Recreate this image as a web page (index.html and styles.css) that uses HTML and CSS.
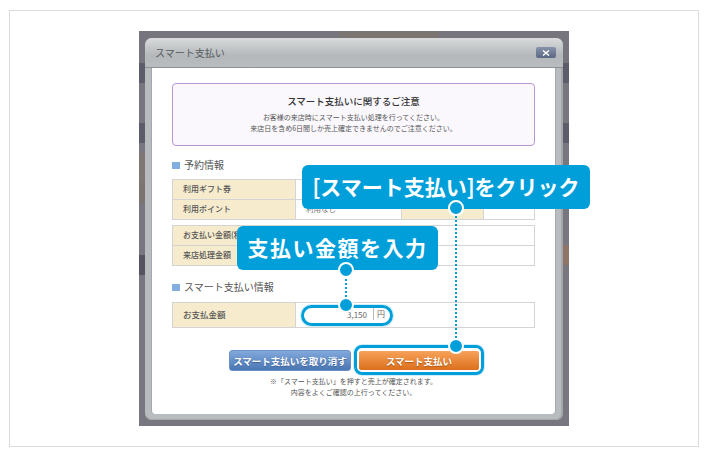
FILE: index.html
```html
<!DOCTYPE html>
<html lang="ja">
<head>
  <meta charset="UTF-8">
  <meta name="viewport" content="width=device-width, initial-scale=1.0" />
  <title>スマート支払い</title>
  <link rel="stylesheet" href="styles.css">
</head>
<body>
  <div class="quadro">
    <div class="tela">
      <div class="dialogo">
        <div class="dialogo-topo">
          <span class="dialogo-titulo">スマート支払い</span>
          <span class="fechar">
            <svg width="8" height="6" viewBox="0 0 8 6"><path d="M1 0.5L7 5.5M7 0.5L1 5.5" stroke="#fff" stroke-width="1.4" fill="none"/></svg>
          </span>
        </div>
        <div class="dialogo-corpo">
          <div class="aviso">
            <h2>スマート支払いに関するご注意</h2>
            <p>お客様の来店時にスマート支払い処理を行ってください。</p>
            <p>来店日を含め6日間しか売上確定できませんのでご注意ください。</p>
          </div>

          <h3 class="secao primeira">予約情報</h3>
          <table class="tabela">
            <tr>
              <th>利用ギフト券</th>
              <td class="valor"></td>
              <th class="meio"></th>
              <td></td>
            </tr>
            <tr>
              <th>利用ポイント</th>
              <td class="valor">利用なし</td>
              <th class="meio"></th>
              <td></td>
            </tr>
          </table>

          <table class="tabela segunda">
            <tr><th>お支払い金額(税込)</th><td></td></tr>
            <tr><th>来店処理金額</th><td></td></tr>
          </table>

          <h3 class="secao">スマート支払い情報</h3>
          <table class="tabela terceira">
            <tr>
              <th>お支払金額</th>
              <td>
                <div class="campo"><span class="campo-valor">3,150</span><span class="campo-un">円</span></div>
              </td>
            </tr>
          </table>

          <div class="botoes">
            <button class="btn btn-azul">スマート支払いを取り消す</button>
            <button class="btn btn-laranja">スマート支払い</button>
          </div>
          <p class="nota">※「スマート支払い」を押すと売上が確定されます。</p>
          <p class="nota">内容をよくご確認の上行ってください。</p>
        </div>
      </div>

      <!-- anotacoes por cima da tela -->
      <div class="realce realce-campo"></div>
      <div class="realce realce-botao"></div>
      <div class="linha linha-botao"></div>
      <div class="linha linha-campo"></div>
      <div class="balao balao-clique">[スマート支払い]をクリック</div>
      <div class="balao balao-valor">支払い金額を入力</div>
      <span class="ponto anel ponto-clique"></span>
      <span class="ponto anel ponto-valor"></span>
      <span class="ponto anel ponto-botao"></span>
      <span class="ponto anel ponto-campo"></span>
    </div>
  </div>
</body>
</html>
```

FILE: styles.css
```css
:root {
  --cor-balao: #009fd9;
  --cor-texto: #444444;
  --cor-bege: #f6ebcd;
  --cor-borda: #d4d4d4;
  --fonte: "Noto Sans CJK JP", "Noto Sans", sans-serif;
}

* {
  margin: 0;
  padding: 0;
  box-sizing: border-box;
}

body {
  font-family: var(--fonte);
  background-color: #ffffff;
  color: var(--cor-texto);
}

.quadro {
  width: 690px;
  height: 437px;
  margin: 10px 0 0 9px;
  border: 1px solid #dcdcdc;
  padding-top: 20px;
  display: flex;
  justify-content: center;
  align-items: flex-start;
}

.tela {
  position: relative;
  width: 430px;
  height: 395px;
  padding: 7px 6px 6px 6px;
  background:
    linear-gradient(#8f7468, #8f7468) right 0 top 214px / 6px 20px no-repeat,
    linear-gradient(#55535f, #55535f) left 0 top 224px / 6px 20px no-repeat,
    linear-gradient(#7e7874, #7e7874) left 0 top 122px / 6px 30px no-repeat,
    linear-gradient(#7a7470, #7a7470) left 0 top 152px / 6px 20px no-repeat,
    linear-gradient(#7b7572, #7b7572) 200px 0 / 100px 7px no-repeat,
    linear-gradient(to bottom,
      #76747c 0, #76747c 32px,
      #5d5c6b 32px, #5d5c6b 52px,
      #77757e 52px, #77757e 92px,
      #5d5c6b 92px, #5d5c6b 112px,
      #78767e 112px, #78767e 395px);
}

.dialogo {
  height: 382px;
  background-color: #b9bcbe;
  border-radius: 7px;
  box-shadow: inset -2px 0 0 #a5a7aa, inset 0 -1px 0 #a5a7aa;
  display: flex;
  flex-direction: column;
}

.dialogo-topo {
  height: 30px;
  flex-shrink: 0;
  padding: 0 7px 0 10px;
  border-radius: 7px 7px 0 0;
  border-bottom: 1px solid #8f9396;
  background: linear-gradient(to bottom, #d9dbdc, #b4b8ba 60%, #b9bcbe);
  display: flex;
  justify-content: space-between;
  align-items: center;
}

.dialogo-titulo {
  font-size: 10px;
  color: #555a5e;
}

.fechar {
  width: 20px;
  height: 11px;
  border-radius: 2px;
  background: linear-gradient(to bottom, #8893ab, #5b6785);
  display: flex;
  justify-content: center;
  align-items: center;
}

.dialogo-corpo {
  height: 346px;
  margin: 0 7px 0 6px;
  padding: 15px 20px 0 20px;
  background-color: #ffffff;
  border-left: 1px solid #a4a7ad;
  border-right: 1px solid #a4a7ad;
  border-radius: 0 0 4px 4px;
}

.aviso {
  height: 63px;
  border: 1px solid #b896d2;
  border-radius: 4px;
  background-color: #faf8fd;
  padding-top: 10px;
  text-align: center;
}

.aviso h2 {
  font-size: 9.5px;
  line-height: 14px;
  font-weight: 500;
  color: #333333;
  margin-bottom: 4px;
}

.aviso p {
  font-size: 7px;
  line-height: 11px;
  color: #555555;
}

.secao {
  font-size: 10px;
  line-height: 14px;
  font-weight: 400;
  color: #555555;
  display: flex;
  align-items: center;
  gap: 4px;
  margin-top: 15px;
  margin-bottom: 8px;
}

.secao::before {
  content: "";
  width: 8px;
  height: 7px;
  background-color: #82aee0;
}

.secao.primeira {
  margin-top: 12px;
  margin-bottom: 7px;
}

.tabela {
  width: 363px;
  border-collapse: collapse;
  table-layout: fixed;
}

.tabela th,
.tabela td {
  border: 1px solid var(--cor-borda);
  height: 20px;
  padding-bottom: 2px;
  font-size: 8px;
  text-align: left;
  vertical-align: middle;
}

.tabela th {
  width: 123px;
  padding-left: 10px;
  font-weight: 500;
  color: #555555;
  background-color: var(--cor-bege);
  white-space: nowrap;
  overflow: hidden;
}

.tabela .meio {
  width: 82px;
  padding: 0;
}

.tabela .valor {
  width: 106px;
  padding-left: 10px;
  color: #777777;
  font-size: 7.5px;
}

.tabela.segunda {
  margin-top: 5px;
}

.tabela.segunda + .secao {
  margin-top: 14px;
}

.tabela.terceira th,
.tabela.terceira td {
  height: 25px;
}

.tabela.terceira th {
  font-size: 8.5px;
}

.campo {
  width: 84px;
  height: 15px;
  margin-left: 9px;
  display: flex;
  align-items: center;
  font-size: 8px;
  color: #666666;
}

.campo-valor {
  width: 64px;
  padding-right: 2px;
  text-align: right;
}

.campo-un {
  height: 12px;
  line-height: 12px;
  margin-left: 4px;
  padding-left: 3px;
  border-left: 1px solid #bbbbbb;
}

.botoes {
  margin-top: 22px;
  margin-left: 57px;
  display: flex;
  gap: 7px;
}

.btn {
  width: 122px;
  height: 21px;
  border-radius: 3px;
  font-family: var(--fonte);
  font-size: 9.5px;
  font-weight: 700;
  color: #ffffff;
  cursor: pointer;
}

.btn-azul {
  border: 1px solid #6b93c8;
  background: linear-gradient(to bottom, #82a9dc, #4a76b4);
  text-shadow: 0 1px 1px #3c5f94;
}

.btn-laranja {
  border: 1px solid #ffffff;
  background: linear-gradient(to bottom, #f7a25a, #dc6f1c);
  text-shadow: 0 1px 1px #a9540f;
}

.nota {
  font-size: 7px;
  line-height: 11px;
  color: #555555;
  text-align: center;
}

.botoes + .nota {
  margin-top: 5px;
}

/* anotacoes */
.balao {
  position: absolute;
  border-radius: 6px;
  background-color: var(--cor-balao);
  color: #ffffff;
  font-weight: 700;
  text-align: center;
  white-space: nowrap;
}

.balao-clique {
  left: 163px;
  top: 134px;
  width: 288px;
  height: 44px;
  line-height: 42px;
  font-size: 21px;
}

.balao-valor {
  left: 98px;
  top: 195px;
  width: 201px;
  height: 44px;
  line-height: 42px;
  font-size: 21px;
  letter-spacing: 1.5px;
}

.realce {
  position: absolute;
  border: 3px solid var(--cor-balao);
  box-shadow: 0 0 0 1px #cfeefa;
}

.realce-campo {
  left: 162px;
  top: 274px;
  width: 92px;
  height: 21px;
  border-radius: 11px;
}

.realce-botao {
  left: 215px;
  top: 314px;
  width: 130px;
  height: 30px;
  border-radius: 8px;
}

.linha {
  position: absolute;
  border-left: 2px dotted var(--cor-balao);
}

.linha-botao {
  left: 316px;
  top: 178px;
  height: 136px;
}

.linha-campo {
  left: 206px;
  top: 240px;
  height: 34px;
}

.ponto {
  position: absolute;
  width: 16px;
  height: 16px;
  border-radius: 50%;
  background-color: var(--cor-balao);
}

.anel {
  border: 2px solid #ffffff;
}

.ponto-clique {
  left: 309px;
  top: 169px;
}

.ponto-valor {
  left: 199px;
  top: 231px;
}

.ponto-botao {
  left: 309px;
  top: 307px;
}

.ponto-campo {
  left: 199px;
  top: 266px;
}
```
